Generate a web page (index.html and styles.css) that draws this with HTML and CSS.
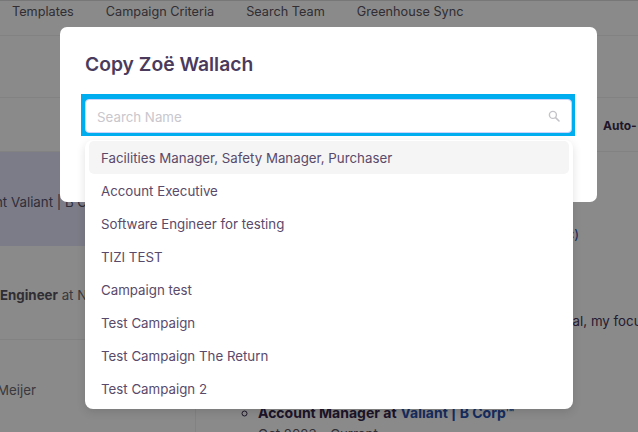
FILE: index.html
```html
<!DOCTYPE html>
<html lang="en">
<head>
<meta charset="utf-8">
<title>Copy Zoë Wallach</title>
<link rel="stylesheet" href="styles.css">
</head>
<body>
<div class="page">
  <nav class="tabs">
    <span>Templates</span><span>Campaign Criteria</span><span>Search Team</span><span>Greenhouse Sync</span>
  </nav>
  <div class="band-a"></div>
  <div class="band-b"><b>Auto-</b></div>
  <div class="body">
    <aside class="side">
      <div class="person selected"><span class="clip-a">nt Valiant | B Corp</span></div>
      <div class="person"><span><b>Engineer</b> at Nike</span></div>
      <div class="person last"><span class="clip-b">Meijer</span></div>
    </aside>
    <main class="detail">
      <p class="link-line"><a>Campaign (Inc)</a></p>
      <p class="summary">As a sales professional, my focus</p>
      <ul class="jobs">
        <li><b>Account Manager at</b> <a><b>Valiant | B Corp™</b></a><div class="dates">Oct 2023 - Current</div></li>
      </ul>
    </main>
  </div>
  <div class="overlay">
    <div class="modal">
      <h1 class="title">Copy Zoë Wallach</h1>
      <div class="focus-ring">
        <div class="search">
          <span class="placeholder">Search Name</span>
          <svg class="search-icon" viewBox="0 0 12 12" width="12" height="12" aria-hidden="true"><circle cx="4.9" cy="4.9" r="3.5" fill="none" stroke="#c4c4c8" stroke-width="1.4"/><path d="M7.6 7.6 11 11" fill="none" stroke="#c4c4c8" stroke-width="1.6" stroke-linecap="round"/></svg>
        </div>
      </div>
      <ul class="menu">
        <li class="active">Facilities Manager, Safety Manager, Purchaser</li>
        <li>Account Executive</li>
        <li>Software Engineer for testing</li>
        <li>TIZI TEST</li>
        <li>Campaign test</li>
        <li>Test Campaign</li>
        <li>Test Campaign The Return</li>
        <li>Test Campaign 2</li>
      </ul>
    </div>
  </div>
</div>
</body>
</html>
```
FILE: styles.css
```css
* { box-sizing: border-box; }
html, body { margin: 0; padding: 0; }
body { font-family: Inter, "Noto Sans", sans-serif; color: #46355a; }
.page { position: relative; width: 638px; height: 432px; overflow: hidden; background: #fff; }
.tabs { height: 36px; display: flex; gap: 32px; padding: 1px 0 0 12px; align-items: flex-start; font-size: 12.7px; line-height: 20px; color: #5a5560; border-top: 1px solid #ddd; border-bottom: 1px solid #f0f0f0; }
.band-a { height: 62px; border-bottom: 1px solid #f0f0f0; }
.band-b { height: 54px; display: flex; align-items: center; justify-content: flex-end; border-bottom: 1px solid #f0f0f0; font-size: 12px; color: #3a2b4c; padding: 1px 0 0; margin-right: -1px; }
.band-b b { width: 36px; white-space: nowrap; overflow: hidden; }
.body { display: flex; height: 280px; }
.side { width: 196px; flex: none; border-right: 1px solid #f0f0f0; }
.person { height: 94px; display: flex; align-items: center; font-size: 13.3px; color: #6d6a72; border-bottom: 1px solid #f0f0f0; white-space: nowrap; overflow: hidden; padding-top: 5px; }
.person b { color: #5a5560; }
.selected { background: #e6e6fb; color: #57546a; border-bottom: 0; padding-top: 6px; }
.last { padding-top: 6px; border-bottom: 0; }
.clip-a { margin-left: -5px; }
.clip-b { margin-left: -3px; }
.detail { flex: 1; font-size: 13.3px; color: #46355a; overflow: hidden; }
.detail p { margin: 0; white-space: nowrap; }
.link-line { padding: 73px 59px 0 0; line-height: 18px; color: #2a52b0; text-align: right; }
.summary { padding: 69px 0 0 243px; line-height: 18px; }
.jobs { margin: 74px 0 0; padding: 0 0 0 62px; list-style: circle; font-size: 14px; line-height: 18px; white-space: nowrap; color: #35264a; }
.jobs a { color: #2a52b0; }
.dates { color: #5a5560; font-size: 13.3px; margin-top: 3px; }
.overlay { position: absolute; inset: 0; background: rgba(0, 0, 0, .46); }
.modal { position: absolute; left: 60px; top: 27px; width: 537px; height: 175px; padding: 23px 21px 0; background: #fff; border-radius: 7px; }
.title { margin: 0 0 0 4px; font-size: 19.3px; line-height: 28px; font-weight: 600; color: #4a3b5c; }
.focus-ring { margin-top: 16px; width: 494px; height: 42px; padding: 5px 3px 3px 4px; background: #00aeef; }
.search { height: 34px; display: flex; align-items: center; justify-content: space-between; padding: 2px 11px 0 11px; background: #fff; border: 1px solid #c9d2fb; border-radius: 4px; font-size: 13.3px; }
.placeholder { color: #c9c7cd; }
.search-icon { display: block; margin-top: -3px; }
.menu { position: absolute; left: 25px; top: 113px; width: 488px; height: 269px; margin: 0; padding: 1px 4px 0; list-style: none; background: #fff; border-radius: 8px; box-shadow: 0 3px 10px rgba(0, 0, 0, .12); font-size: 13.3px; color: #5a4a6a; }
.menu li { height: 33px; line-height: 35px; padding-left: 12px; border-radius: 5px; white-space: nowrap; }
.menu .active { background: #f5f5f5; }
```
